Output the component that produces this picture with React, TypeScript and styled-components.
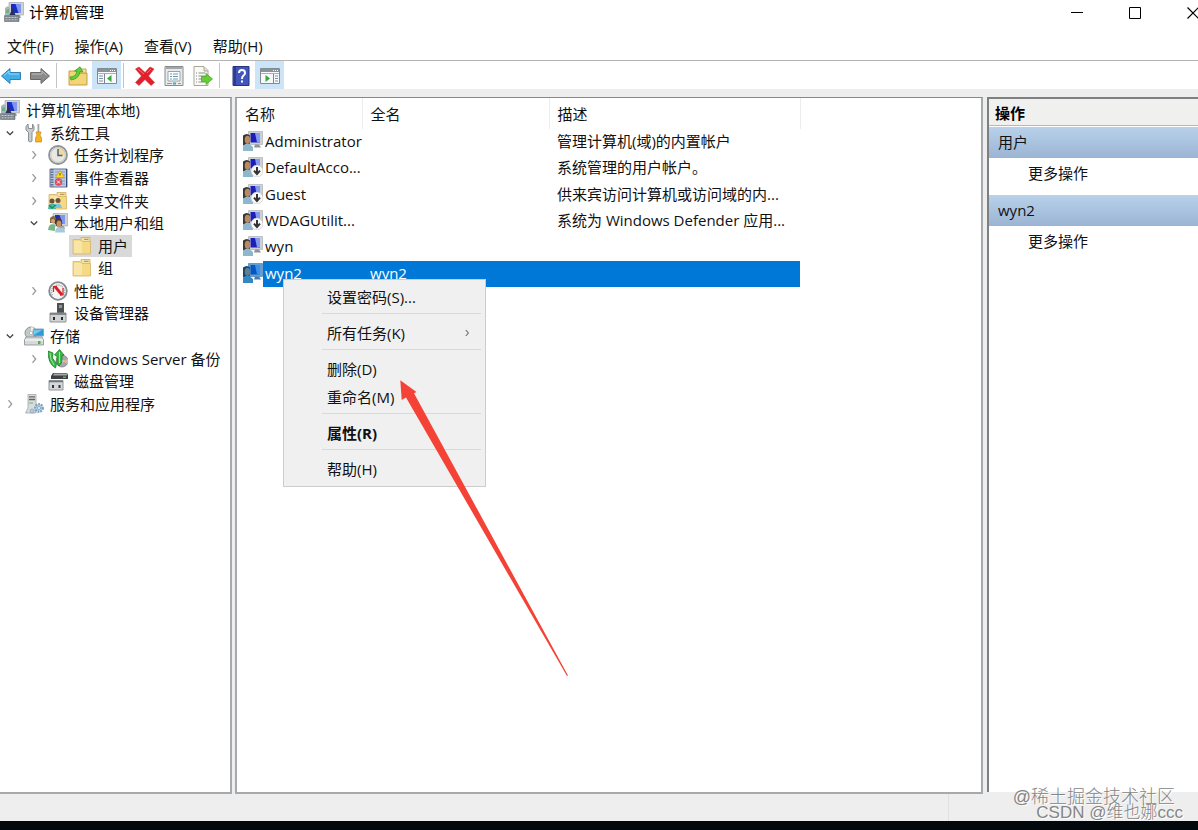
import React from "react";
import styled, { createGlobalStyle, css } from "styled-components";

const GlobalStyle = createGlobalStyle`
  * { box-sizing: border-box; }
  body {
    margin: 0;
    overflow: hidden;
    background: #fff;
    color: #111;
    font-family: "Open Sans", "Noto Sans CJK SC", sans-serif;
    font-size: 15px;
    line-height: 22px;
  }
  button {
    margin: 0;
    padding: 0;
    border: 0;
    background: none;
    color: inherit;
    font: inherit;
    text-align: left;
    white-space: nowrap;
  }
  svg { display: block; flex: none; }
`;

const Window = styled.div`
  display: flex;
  flex-direction: column;
  min-height: 100vh;
  position: relative;
  overflow: hidden;
`;

const TitleBar = styled.header`
  display: flex;
  align-items: center;
  height: 32px;
  padding: 0 0 8px 4px;
  gap: 5px;
`;

const Title = styled.h1`
  flex: 1;
  margin: 0;
  font-size: 15px;
  font-weight: 400;
  color: #000;
`;

const Caption = styled.div`
  display: flex;
  margin-right: -24px;
`;

const CaptionButton = styled.button`
  display: grid;
  place-items: center;
  width: 58px;
  height: 24px;
  padding-top: 2px;
`;

const MenuBar = styled.nav`
  display: flex;
  align-items: center;
  gap: 21px;
  height: 28px;
  padding: 0 7px;
`;

const Toolbar = styled.div`
  display: flex;
  align-items: stretch;
  height: 29px;
  border-top: 1px solid #b4b4b4;
  margin-left: -4px;
`;

const ToolButton = styled.button<{ $on?: boolean }>`
  display: grid;
  place-items: center;
  width: 29px;
  padding-top: 2px;
  background: ${(p) => (p.$on ? "#cce4f7" : "transparent")};
`;

const ToolDivider = styled.span`
  width: 1px;
  margin: 2px 6px 1px 2px;
  background: #c4c4c4;
`;

const Panes = styled.main`
  display: grid;
  grid-template-columns: 232px minmax(0, 1fr) 211px;
  flex: 1;
  padding-top: 8px;
  background: #eee;
`;

const TreePane = styled.section`
  background: #fff;
  border: solid #a6aaad;
  border-top-color: #85898d;
  border-width: 1px 2px 2px 0;
  padding-top: 1px;
`;

const ListPane = styled.section`
  position: relative;
  margin: 0 4px 0 3px;
  background: #fff;
  border: solid #a6aaad;
  border-top-color: #85898d;
  border-width: 1px 2px 2px;
`;

const ActionPane = styled.section`
  margin-bottom: 2px;
  background: #fff;
  border: solid #7d7f81;
  border-width: 2px 0 0 2px;
`;

const Tree = styled.ul`
  display: flex;
  flex-direction: column;
  height: 316px;
  margin: 0;
  padding: 0;
  list-style: none;
`;

const TreeRow = styled.li<{ $depth: number }>`
  display: flex;
  flex: 1;
  align-items: center;
  margin-left: ${(p) => p.$depth * 24 - 24}px;
`;

const Toggle = styled.button`
  display: grid;
  place-items: center;
  width: 20px;
  height: 20px;
  flex: none;
`;

const ToggleSpace = styled.span`
  width: 20px;
  flex: none;
`;

const TreeLabel = styled.button<{ $selected?: boolean }>`
  display: flex;
  align-items: center;
  gap: 6px;
  height: 22px;
  margin-left: 1px;
  padding: 0 4px 0 3px;
  background: ${(p) => (p.$selected ? "#d9d9d9" : "transparent")};
`;

const UserTable = styled.table`
  width: 563px;
  height: 189px;
  border-collapse: collapse;
  table-layout: fixed;
`;

const HeadCell = styled.th`
  height: 31px;
  padding: 1px 0 0 8px;
  font-weight: 400;
  text-align: left;
  border-right: 1px solid #ececec;
`;

const UserRow = styled.tr<{ $selected?: boolean }>`
  height: 26px;
  ${(p) =>
    p.$selected &&
    css`
      color: #fff;
      td:not(:first-child) { background: #0078d7; }
    `}
`;

const Cell = styled.td<{ $pad: number }>`
  padding: 0 0 2px ${(p) => p.$pad}px;
  white-space: nowrap;
`;

const ContextMenu = styled.div`
  position: absolute;
  left: 46px;
  top: 181px;
  width: 203px;
  padding: 3px 4px 3px 0;
  background: #f0f0f0;
  border: 1px solid #ccc;
`;

const MenuItem = styled.button<{ $strong?: boolean }>`
  display: flex;
  align-items: center;
  justify-content: space-between;
  width: 100%;
  height: 28px;
  padding: 0 10px 0 43px;
  font-weight: ${(p) => (p.$strong ? 700 : 400)};
`;

const MenuLine = styled.hr`
  height: 1px;
  margin: 2px 0 5px 38px;
  border: 0;
  background: #d9d9d9;
`;

const PaneTitle = styled.h2`
  margin: 0 0 1px;
  height: 27px;
  padding: 3px 6px 0;
  background: #f0f0ee;
  border-bottom: 1px solid #b5b9bb;
  font-size: 15px;
  font-weight: 700;
  line-height: 22px;
  color: #000;
`;

const GroupTitle = styled.h3`
  display: flex;
  align-items: center;
  margin: 0;
  height: 31px;
  padding: 0 9px 2px;
  background: linear-gradient(#b9d1ea, #9ab4d3);
  font-size: 15px;
  font-weight: 400;
`;

const MoreButton = styled.button`
  display: block;
  width: 100%;
  height: 37px;
  padding: 0 0 7px 39px;
`;

const StatusBar = styled.footer`
  display: flex;
  justify-content: flex-end;
  height: 27px;
  background: #eee;
`;

const StatusCell = styled.div`
  width: 250px;
  border-left: 1px solid #e0e0e0;
`;

const Taskbar = styled.div`
  height: 9px;
  background: #03080c;
`;

const Watermark = styled.div`
  position: absolute;
  right: 15px;
  bottom: 9px;
  color: #858585;
  font-family: "Liberation Sans", "Noto Sans CJK SC", sans-serif;
  font-weight: 300;
  text-shadow: 1px 1px 0 #fff;
  text-align: right;
  white-space: nowrap;
`;

const MarkLine = styled.div<{ $first?: boolean }>`
  font-size: ${(p) => (p.$first ? 18 : 17)}px;
  line-height: 16px;
  padding-right: ${(p) => (p.$first ? 8 : 0)}px;
`;

const Pointer = styled.svg`
  position: absolute;
  left: 163px;
  top: 282px;
  pointer-events: none;
`;

const Chevron = ({ open, small }: { open?: boolean; small?: boolean }) => (
  <svg
    width={small ? 8 : 10}
    height={small ? 8 : 10}
    viewBox="0 0 10 10"
    fill="none"
    stroke={open ? "#404040" : small ? "#666" : "#9a9a9a"}
    strokeWidth="1.3"
  >
    <path d={open ? "M1.8 3.5 5 6.7 8.2 3.5" : "M3.5 1.2 6.7 5 3.5 8.8"} />
  </svg>
);

const Ico = ({ children }: { children: React.ReactNode }) => (
  <svg width="20" height="20" viewBox="0 0 20 20" aria-hidden="true">
    {children}
  </svg>
);

const Screen = () => (
  <>
    <path d="M5 .5h14.500v12.500H5z" fill="#cfd3d6" stroke="#a5a9ac" strokeWidth=".7" />
    <path d="M7 2h10v9H7z" fill="#1c2cc4" />
    <path d="M11.500 2H17v9h-2.500z" fill="#7d97f0" />
    <path d="M11 13h5l1 3H9z" fill="#a0a4a7" />
  </>
);

const ComputerIcon = () => (
  <Ico>
    <Screen />
    <path d="M1 6l3-2 2 2v7H1z" fill="#a9b7ba" />
    <path d="M2 8l3-1v4H2z" fill="#6fae86" />
    <path d="M8.500 6l3 7h-6z" fill="#26325c" />
    <path d="M.5 13.500h14.500v6H.5z" fill="#7b858b" stroke="#636c72" strokeWidth=".6" />
    <path d="M1.500 15.500h12.500M1.500 17.800h12.500" stroke="#c7cdd0" strokeDasharray="2 1" />
  </Ico>
);

const UserIcon = ({ down, tint }: { down?: boolean; tint?: boolean }) => (
  <Ico>
    <path d="M5.500 .5h14v13h-14z" fill={tint ? "#659dcc" : "#cdd0d4"} stroke={tint ? "#4384bd" : "#adb1b4"} strokeWidth=".7" />
    <path d="M7.500 2h9.500v9.500H7.500z" fill={tint ? "#0755c4" : "#1b1fb8"} />
    <path d="M12 2h5v9.500h-3z" fill={tint ? "#3d8fea" : "#8599f1"} />
    <path d="M12 13.500h4l2 3h-7z" fill={tint ? "#4c7ca5" : "#8d9296"} />
    <path d="M0 4.500q4-3 7 0v8l-3 2H0z" fill={tint ? "#16446f" : "#3b3631"} />
    <ellipse cx="4.500" cy="8.800" rx="2.800" ry="4" fill={tint ? "#5c7f91" : "#b98962"} />
    <path d="M0 20v-5q4-4 7-1.500l3 2.500v4z" fill={tint ? "#3388c2" : "#8eb7ce"} />
    {down && (
      <>
        <circle cx="14" cy="14" r="6" fill="#f8f8f8" stroke="#bbb" strokeWidth=".5" />
        <path d="M14 10v7M11 13.700l3 3.300 3-3.300" fill="none" stroke="#333" strokeWidth="2" />
      </>
    )}
  </Ico>
);

const ToolsIcon = () => (
  <Ico>
    <path d="M4 1L2 3.500V7l2.500 2.500V18q1.500 2 3.500 0V9.500L10 7V3.500L8.500 1v4.500h-4z" fill="#c9cdcf" stroke="#808689" strokeWidth=".9" />
    <path d="M13.500 1h1.800v9h-1.800z" fill="#a2a5a6" />
    <path d="M12 9h5l-1 3 1.500 3v4h-6v-4l1.500-3z" fill="#f6b51f" stroke="#c98517" strokeWidth=".7" />
  </Ico>
);

const ClockIcon = () => (
  <Ico>
    <circle cx="10" cy="10" r="9" fill="#e9e7df" stroke="#8f9497" strokeWidth="1.800" />
    <path d="M10 10V2a8 8 0 0 1 7 8z" fill="#f1d99a" />
    <circle cx="10" cy="10" r="7.300" fill="none" stroke="#c5c9ca" />
    <path d="M10 4v6.500h4.500" fill="none" stroke="#486180" strokeWidth="1.500" />
  </Ico>
);

const EventIcon = () => (
  <Ico>
    <path d="M2 1h17v18H2z" fill="#bdcbe5" stroke="#64759e" />
    <path d="M7 4h10M7 7h10M7 10h10M7 13h10M7 16h10" stroke="#8699bf" />
    <path d="M18 1h1v18h-1z" fill="#354879" />
    <path d="M4 1v18" stroke="#65728c" strokeWidth="3" strokeDasharray="1.500 1" />
    <path d="M12 2.500l4.500 7h-9z" fill="#ffdb24" stroke="#c59b10" strokeWidth=".6" />
    <path d="M12 5v2.500" stroke="#654a00" />
    <circle cx="10.500" cy="14" r="3.700" fill="#e14b58" />
    <path d="M9 12.500l3 3m0-3l-3 3" stroke="#fff" />
  </Ico>
);

const FolderShape = () => (
  <>
    <path d="M9 1.500h9v5H9z" fill="#f3e4a5" stroke="#cfab5c" strokeWidth=".8" />
    <path d="M12 3.300h4.500" stroke="#a98a58" />
    <path d="M1 3.500h7l2 2h8.500V18H1z" fill="#f5d985" stroke="#d6b563" strokeWidth=".8" />
    <path d="M2 5h7l2 2h-1v10H2z" fill="#f9e6a6" />
  </>
);
const FolderIcon = () => <Ico><FolderShape /></Ico>;

const SharedIcon = () => (
  <Ico>
    <FolderShape />
    <circle cx="4" cy="10" r="2.500" fill="#6d513c" />
    <circle cx="10" cy="9.500" r="2.500" fill="#6d513c" />
    <path d="M0 18q1-7 7-5l1 5z" fill="#4bb7a2" />
    <path d="M6 17q2-7 7-3l1 3z" fill="#7bc2dc" />
    <path d="M1 14l3 3 4-3" stroke="#188f62" strokeWidth="1.500" fill="none" />
  </Ico>
);

const GroupIcon = () => (
  <Ico>
    <Screen />
    <path d="M2 5q4-4 6 0l-1 5H2z" fill="#846844" />
    <path d="M7 7q5-5 7 1v5H8z" fill="#4b382c" />
    <circle cx="5" cy="8" r="2" fill="#d0a579" />
    <ellipse cx="11" cy="11" rx="2.500" ry="3.500" fill="#c39167" />
    <path d="M0 17q1-8 7-5v6z" fill="#75b785" />
    <path d="M7 19.500q1-7 6-4.500 4-1 4 4.500z" fill="#a7c9e0" />
  </Ico>
);

const GaugeIcon = () => (
  <Ico>
    <circle cx="10" cy="10" r="8.800" fill="#f4f4f4" stroke="#85898b" strokeWidth="1.800" />
    <path d="M4.500 14a6.500 6.500 0 1 1 11 0" fill="none" stroke="#a2a8aa" strokeWidth="1.500" strokeDasharray="1 1" />
    <path d="M7 5.500l7 8.500" stroke="#d91e28" strokeWidth="2.800" />
    <path d="M5.500 11V5.500H9M15 7v7h-3" fill="none" stroke="#d91e28" strokeWidth="1.200" />
  </Ico>
);

const DeviceIcon = () => (
  <Ico>
    <path d="M9 0h7v10H9z" fill="#4b5052" />
    <path d="M11 2h3v3h-3z" fill="#90989b" />
    <path d="M2 10h16v9H2z" fill="#d0d3d4" stroke="#909597" />
    <path d="M2 11h16" stroke="#6e7375" strokeWidth="1.500" />
    <path d="M5 14h2v3H5zM13 14h2v3h-2z" fill="#292d2f" />
  </Ico>
);

const StorageIcon = () => (
  <Ico>
    <ellipse cx="7" cy="7" rx="6" ry="6" fill="#c3c8c9" stroke="#8c9294" />
    <path d="M7 1a6 6 0 0 1 3 1L7 7z" fill="#eef1f1" />
    <circle cx="7" cy="7" r="1.700" fill="#fff" stroke="#8c9294" strokeWidth=".5" />
    <path d="M9.500 3h10v7h-10z" fill="#2f9bd5" stroke="#87a9b9" />
    <path d="M10 4h8l-8 5z" fill="#79c4ea" />
    <path d="M2 11h16l1.500 3v5H.5v-5z" fill="#d7dadb" stroke="#888e91" strokeWidth=".8" />
    <path d="M1 14h18" stroke="#fff" />
    <path d="M14 15h2.500v3H14z" fill="#55b53a" />
  </Ico>
);

const BackupIcon = () => (
  <Ico>
    <circle cx="14" cy="12" r="6" fill="#aaa3b0" stroke="#777" strokeWidth=".7" />
    <path d="M14 12l6-2v5z" fill="#d7b89b" />
    <circle cx="14" cy="12" r="1.500" fill="#eee" />
    <path d="M0 2l5 2-.5 5 4 6-1 4Q0 15 0 2zM11.500 .5L16 6l-2 .5V13l-3 4-2-3V7L6.500 6z" fill="#39b944" stroke="#167e29" strokeWidth=".8" />
    <path d="M2 4q0 7 4 12M11.500 3v11" stroke="#9be49b" fill="none" />
  </Ico>
);

const DiskIcon = () => (
  <Ico>
    <path d="M5 2h14l1 2v4H3V5z" fill="#3e4244" />
    <path d="M6 2.500h13v2H5z" fill="#a3a7a9" />
    <path d="M15 5.500h3v1.500h-3z" fill="#45c14f" />
    <path d="M1 9.500h14v9.500H1z" fill="#d5d7d8" stroke="#919698" />
    <path d="M1 10.500h14" stroke="#717678" strokeWidth="1.500" />
    <path d="M4 14h2v3H4zM10.500 14h2v3h-2z" fill="#303436" />
  </Ico>
);

const ServicesIcon = () => (
  <Ico>
    <path d="M4 .5h8V19H1.500L4 14z" fill="#d9dcdd" stroke="#a1a6a9" strokeWidth=".8" />
    <path d="M5 2.800h6M5 5.500h6" stroke="#5f666a" strokeWidth="1.300" />
    <path d="M5 9h4" stroke="#6ab870" />
    <circle cx="15" cy="14" r="3.700" fill="#c2daea" stroke="#7ba1bb" strokeWidth="2.500" strokeDasharray="1.700 1" />
    <circle cx="15" cy="14" r="1.500" fill="#f4fafe" stroke="#5f91b5" strokeWidth=".7" />
    <circle cx="8" cy="17" r="2" fill="#b5cfde" stroke="#83a7bd" strokeWidth=".8" />
  </Ico>
);

const ArrowIcon = ({ back }: { back?: boolean }) => (
  <Ico>
    <path
      d={back ? "M.500 10L9 2.500v4h10.500v7H9v4z" : "M19.500 10L11 2.500v4H.5v7H11v4z"}
      fill={back ? "#42aee8" : "#8b8b8b"}
      stroke={back ? "#2f82b5" : "#686868"}
    />
    <path d={back ? "M3 9.500L8 5v3h10" : "M2 8h10V5l4.500 4.500"} fill="none" stroke={back ? "#91dafa" : "#bdbdbd"} />
  </Ico>
);

const UpFolderIcon = () => (
  <Ico>
    <path d="M1 5h7l2 2h9v12H1z" fill="#f3d477" stroke="#c69f47" />
    <path d="M12 3h6v4h-6z" fill="#f5e4a4" stroke="#c69f47" />
    <path d="M2 11q6 0 7-6L6.500 5 12 .8 15 6l-3-.5Q11 13 3 14z" fill="#61cf38" stroke="#329a20" strokeWidth=".7" />
  </Ico>
);

const PaneIcon = ({ right }: { right?: boolean }) => (
  <Ico>
    <path d="M.5 2.500h19v15H.5z" fill="#f7f9fa" stroke="#838b92" />
    <path d="M1 3h18v3H1z" fill="#89939b" />
    <path d="M13 4.500h1M15 4.500h1M17 4.500h1" stroke="#fff" />
    <path d="M1 7.500h18" stroke="#a8b0b6" />
    <path d={right ? "M13.500 8v9" : "M7.500 8v9"} stroke="#7b858d" />
    <path d={right ? "M15 10h3M15 12.500h3M15 15h3" : "M2 10h4M2 12.500h4M2 15h4"} stroke="#7690ad" />
    <path d={right ? "M5.500 9v7l4.500-3.500z" : "M14.500 9v7l-4.500-3.500z"} fill="#36a936" />
  </Ico>
);

const DeleteIcon = () => (
  <Ico>
    <path d="M.5 3l3.500-2 6 5.500 5-5.500 4 2-5.500 7 6 6.500-3.500 3-6-6-6 6-3.500-3 6-6.500z" fill="#e3202a" stroke="#c8343a" strokeWidth=".6" />
    <path d="M3 3l6 5M12 7l4-4" stroke="#f67b7c" />
  </Ico>
);

const PropertiesIcon = () => (
  <Ico>
    <path d="M1 .5h18v19H1z" fill="#e8eaeb" stroke="#868c8f" />
    <path d="M2 2h16" stroke="#a1a8ac" strokeWidth="2" />
    <path d="M4 5.500h12V15H4z" fill="#fff" stroke="#98a3a9" />
    <path d="M6 8h2M9 8h5M6 10.500h2M9 10.500h5M6 13h2M9 13h5" stroke="#6e99b3" />
    <path d="M3 17.500h5M14 17.500h3" stroke="#999" />
    <path d="M9 17.500h3" stroke="#22b5d7" strokeWidth="2" />
  </Ico>
);

const ExportIcon = () => (
  <Ico>
    <path d="M1 .5h10l4 4v15H1z" fill="#fafaf4" stroke="#a7a795" />
    <path d="M11 1v4h4" fill="#e2e2d5" stroke="#a7a795" />
    <path d="M3 7h1M3 10h1M3 13h1M3 16h1M5.500 7h7M5.500 10h7M5.500 13h7M5.500 16h7" stroke="#8b8f91" />
    <path d="M8.500 10.500H13V7.500l6.500 5.500-6.500 5.500v-3H8.500z" fill="#66cd38" stroke="#43a020" strokeWidth=".7" />
  </Ico>
);

const HelpIcon = () => (
  <Ico>
    <path d="M2 .5h16v19H2z" fill="#4155bc" stroke="#27357e" />
    <path d="M3 1h2v18H3z" fill="#2b3c91" />
    <path d="M8 7q0-3 3-3t3 3q0 1.500-1.500 2.500T11 13" fill="none" stroke="#fff" strokeWidth="2" />
    <path d="M10 14.500h2v2h-2z" fill="#fff" />
  </Ico>
);

type Node = { label: string; depth: number; open?: boolean; icon: React.ReactNode; selected?: boolean };

const nodes: Node[] = [
  { label: "计算机管理(本地)", depth: 0, icon: <ComputerIcon /> },
  { label: "系统工具", depth: 1, open: true, icon: <ToolsIcon /> },
  { label: "任务计划程序", depth: 2, open: false, icon: <ClockIcon /> },
  { label: "事件查看器", depth: 2, open: false, icon: <EventIcon /> },
  { label: "共享文件夹", depth: 2, open: false, icon: <SharedIcon /> },
  { label: "本地用户和组", depth: 2, open: true, icon: <GroupIcon /> },
  { label: "用户", depth: 3, icon: <FolderIcon />, selected: true },
  { label: "组", depth: 3, icon: <FolderIcon /> },
  { label: "性能", depth: 2, open: false, icon: <GaugeIcon /> },
  { label: "设备管理器", depth: 2, icon: <DeviceIcon /> },
  { label: "存储", depth: 1, open: true, icon: <StorageIcon /> },
  { label: "Windows Server 备份", depth: 2, open: false, icon: <BackupIcon /> },
  { label: "磁盘管理", depth: 2, icon: <DiskIcon /> },
  { label: "服务和应用程序", depth: 1, open: false, icon: <ServicesIcon /> },
];

const users = [
  { name: "Administrator", full: "", desc: "管理计算机(域)的内置帐户" },
  { name: "DefaultAcco...", full: "", desc: "系统管理的用户帐户。", down: true },
  { name: "Guest", full: "", desc: "供来宾访问计算机或访问域的内...", down: true },
  { name: "WDAGUtilit...", full: "", desc: "系统为 Windows Defender 应用...", down: true },
  { name: "wyn", full: "", desc: "" },
  { name: "wyn2", full: "wyn2", desc: "", selected: true },
];

export default function App() {
  return (
    <Window>
      <GlobalStyle />
      <TitleBar>
        <ComputerIcon />
        <Title>计算机管理</Title>
        <Caption>
          <CaptionButton aria-label="最小化">
            <svg width="12" height="12"><path d="M0 5.500h12" stroke="#000" /></svg>
          </CaptionButton>
          <CaptionButton aria-label="最大化">
            <svg width="12" height="12"><path d="M.5.5h11v11H.5z" fill="none" stroke="#000" /></svg>
          </CaptionButton>
          <CaptionButton aria-label="关闭">
            <svg width="12" height="12"><path d="M.5.5l11 11m0-11l-11 11" stroke="#000" strokeWidth="1.200" /></svg>
          </CaptionButton>
        </Caption>
      </TitleBar>
      <MenuBar>
        <button>文件(F)</button>
        <button>操作(A)</button>
        <button>查看(V)</button>
        <button>帮助(H)</button>
      </MenuBar>
      <Toolbar role="toolbar">
        <ToolButton aria-label="后退"><ArrowIcon back /></ToolButton>
        <ToolButton aria-label="前进"><ArrowIcon /></ToolButton>
        <ToolDivider />
        <ToolButton aria-label="上一级"><UpFolderIcon /></ToolButton>
        <ToolButton $on aria-label="控制台树"><PaneIcon /></ToolButton>
        <ToolDivider />
        <ToolButton aria-label="删除"><DeleteIcon /></ToolButton>
        <ToolButton aria-label="属性"><PropertiesIcon /></ToolButton>
        <ToolButton aria-label="导出列表"><ExportIcon /></ToolButton>
        <ToolDivider />
        <ToolButton aria-label="帮助"><HelpIcon /></ToolButton>
        <ToolButton $on aria-label="操作窗格"><PaneIcon right /></ToolButton>
      </Toolbar>
      <Panes>
        <TreePane>
          <Tree>
            {nodes.map((n) => (
              <TreeRow key={n.label} $depth={n.depth}>
                {n.open === undefined ? (
                  <ToggleSpace />
                ) : (
                  <Toggle aria-label={n.label} aria-expanded={n.open}>
                    <Chevron open={n.open} />
                  </Toggle>
                )}
                <TreeLabel $selected={n.selected}>
                  {n.icon}
                  {n.label}
                </TreeLabel>
              </TreeRow>
            ))}
          </Tree>
        </TreePane>
        <ListPane>
          <UserTable>
            <colgroup>
              <col width="26" />
              <col width="99" />
              <col width="187" />
              <col width="251" />
            </colgroup>
            <thead>
              <tr>
                <HeadCell colSpan={2}>名称</HeadCell>
                <HeadCell>全名</HeadCell>
                <HeadCell>描述</HeadCell>
              </tr>
            </thead>
            <tbody>
              {users.map((u) => (
                <UserRow key={u.name} $selected={u.selected}>
                  <Cell $pad={6}><UserIcon down={u.down} tint={u.selected} /></Cell>
                  <Cell $pad={2}>{u.name}</Cell>
                  <Cell $pad={8}>{u.full}</Cell>
                  <Cell $pad={8}>{u.desc}</Cell>
                </UserRow>
              ))}
            </tbody>
          </UserTable>
          <ContextMenu role="menu">
            <MenuItem role="menuitem">设置密码(S)...</MenuItem>
            <MenuLine />
            <MenuItem role="menuitem">所有任务(K)<Chevron small /></MenuItem>
            <MenuLine />
            <MenuItem role="menuitem">删除(D)</MenuItem>
            <MenuItem role="menuitem">重命名(M)</MenuItem>
            <MenuLine />
            <MenuItem role="menuitem" $strong>属性(R)</MenuItem>
            <MenuLine />
            <MenuItem role="menuitem">帮助(H)</MenuItem>
          </ContextMenu>
          <Pointer width="170" height="298" viewBox="400 380 170 298" aria-hidden="true">
            <path d="M400.300 380.300L416.500 392l-2.500 1.300L568 675.500l-1 .5L406 397.500l-4.300 2.500z" fill="#f44336" />
          </Pointer>
        </ListPane>
        <ActionPane>
          <PaneTitle>操作</PaneTitle>
          <GroupTitle>用户</GroupTitle>
          <MoreButton>更多操作</MoreButton>
          <GroupTitle>wyn2</GroupTitle>
          <MoreButton>更多操作</MoreButton>
        </ActionPane>
      </Panes>
      <StatusBar><StatusCell /></StatusBar>
      <Taskbar />
      <Watermark>
        <MarkLine $first>@稀土掘金技术社区</MarkLine>
        <MarkLine>CSDN @维也娜ccc</MarkLine>
      </Watermark>
    </Window>
  );
}
